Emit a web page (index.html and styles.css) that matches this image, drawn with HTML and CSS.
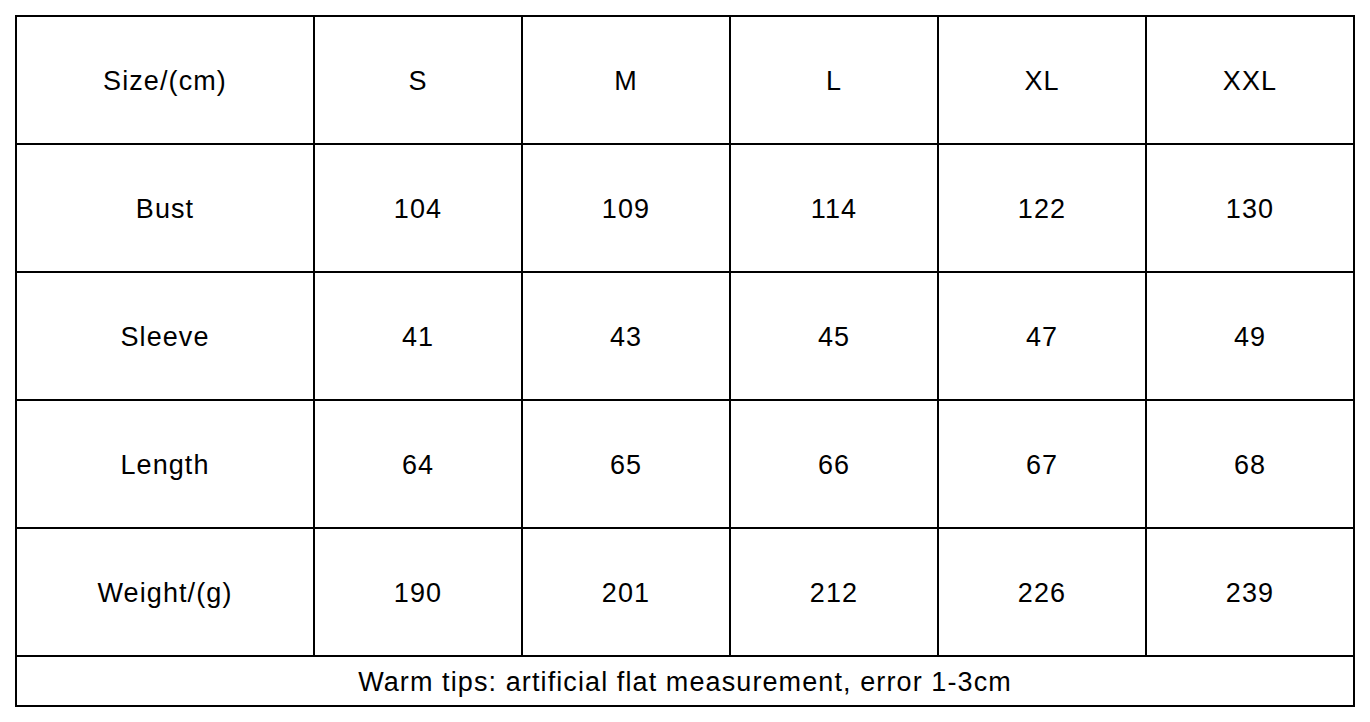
FILE: index.html
```html
<!DOCTYPE html>
<html>
<head>
<meta charset="utf-8">
<link rel="stylesheet" href="styles.css">
</head>
<body>
<div class="chart">
  <div class="cell">Size/(cm)</div>
  <div class="cell">S</div>
  <div class="cell">M</div>
  <div class="cell">L</div>
  <div class="cell">XL</div>
  <div class="cell">XXL</div>

  <div class="cell">Bust</div>
  <div class="cell">104</div>
  <div class="cell">109</div>
  <div class="cell">114</div>
  <div class="cell">122</div>
  <div class="cell">130</div>

  <div class="cell">Sleeve</div>
  <div class="cell">41</div>
  <div class="cell">43</div>
  <div class="cell">45</div>
  <div class="cell">47</div>
  <div class="cell">49</div>

  <div class="cell">Length</div>
  <div class="cell">64</div>
  <div class="cell">65</div>
  <div class="cell">66</div>
  <div class="cell">67</div>
  <div class="cell">68</div>

  <div class="cell">Weight/(g)</div>
  <div class="cell">190</div>
  <div class="cell">201</div>
  <div class="cell">212</div>
  <div class="cell">226</div>
  <div class="cell">239</div>

  <div class="cell note">Warm tips: artificial flat measurement, error 1-3cm</div>
</div>
</body>
</html>
```

FILE: styles.css
```css
html, body {
  background: #ffffff;
}
body {
  margin: 15px;
  font-family: "Liberation Sans", Arial, sans-serif;
  color: #000000;
}
.chart {
  display: grid;
  width: max-content;
  grid-template-columns: 296px repeat(5, 206px);
  grid-template-rows: repeat(5, 126px) 48px;
  gap: 2px;
  padding: 2px;
  background: #000000;
}
.cell {
  background: #ffffff;
  display: flex;
  align-items: center;
  justify-content: center;
  font-size: 27px;
  line-height: 1;
  letter-spacing: 1.1px;
  padding-top: 3px;
}
.note {
  grid-column: 1 / -1;
}
```
